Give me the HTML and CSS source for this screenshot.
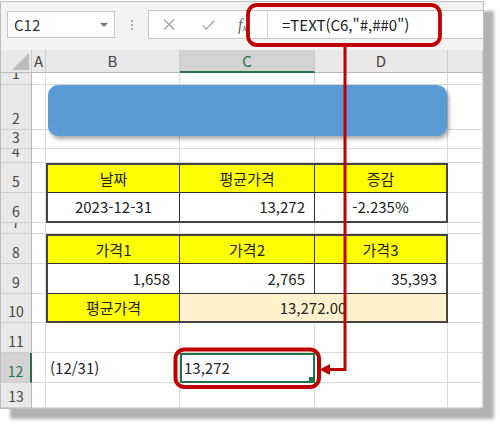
FILE: index.html
```html
<!DOCTYPE html>
<html lang="ko">
<head>
<meta charset="utf-8">
<title>TEXT 함수</title>
<link rel="stylesheet" href="styles.css">
</head>
<body>
<div class="stage">
  <div class="window">
    <div class="fbar">
      <div class="namebox"><span class="nb-text">C12</span><span class="nb-arrow"></span></div>
      <div class="grip"><i></i><i></i><i></i></div>
      <div class="formula">
        <div class="fbtns">
          <span class="fbtn"><svg width="12" height="11" viewBox="0 0 12 11"><path d="M1 0.5 L11 10.5 M11 0.5 L1 10.5" stroke="#a3a3a3" stroke-width="1.3" fill="none"/></svg></span>
          <span class="fbtn"><svg width="13" height="10" viewBox="0 0 13 10"><path d="M0.8 5.6 L4.4 9 L12.2 0.8" stroke="#a8a8a8" stroke-width="1.4" fill="none"/></svg></span>
          <span class="fbtn fx"><i>f</i><span class="fxx">x</span></span>
        </div>
        <div class="ftext">=TEXT(C6,"#,##0")</div>
      </div>
    </div>
    <div class="sheet">
      <div class="ch corner"><span class="tri"></span></div>
      <div class="ch">A</div>
      <div class="ch">B</div>
      <div class="ch sel">C</div>
      <div class="ch">D</div>
      <div class="ch"></div>

      <div class="rh">1</div><div></div><div></div><div></div><div></div><div></div>
      <div class="rh">2</div><div></div><div></div><div></div><div></div><div></div>
      <div class="rh">3</div><div></div><div></div><div></div><div></div><div></div>
      <div class="rh">4</div><div></div><div></div><div></div><div></div><div></div>

      <div class="rh">5</div><div></div>
      <div class="t tt tl y ctr">날짜</div>
      <div class="t tt y ctr">평균가격</div>
      <div class="t tt tr y ctr">증감</div>
      <div></div>

      <div class="rh">6</div><div></div>
      <div class="t tl tbm ctr">2023-12-31</div>
      <div class="t tbm rt">13,272</div>
      <div class="t tbm tr ctr">-2.235%</div>
      <div></div>

      <div class="rh">7</div><div></div><div></div><div></div><div></div><div></div>

      <div class="rh">8</div><div></div>
      <div class="t tt tl y ctr">가격1</div>
      <div class="t tt y ctr">가격2</div>
      <div class="t tt tr y ctr">가격3</div>
      <div></div>

      <div class="rh">9</div><div></div>
      <div class="t tl rt">1,658</div>
      <div class="t rt">2,765</div>
      <div class="t tr rt">35,393</div>
      <div></div>

      <div class="rh">10</div><div></div>
      <div class="t tl tbm y ctr">평균가격</div>
      <div class="t tbm tr o ctr span2">13,272.00</div>
      <div></div>

      <div class="rh">11</div><div></div><div></div><div></div><div></div><div></div>

      <div class="rh sel">12</div><div></div>
      <div class="lt">(12/31)</div>
      <div class="lt cur">13,272</div>
      <div></div><div></div>

      <div class="rh">13</div><div></div><div></div><div></div><div></div><div></div>
    </div>
    <div class="shape"></div>
  </div>
  <svg class="overlay" width="500" height="425" viewBox="0 0 500 425">
    <rect x="248" y="5" width="192" height="40" rx="9" ry="9" fill="none" stroke="#c00000" stroke-width="3.8"/>
    <polyline points="345,46 345,369.5 329,369.5" fill="none" stroke="#c00000" stroke-width="3"/>
    <polygon points="319.5,369.5 330,364 330,375" fill="#c00000"/>
    <rect x="175.5" y="349.5" width="143.5" height="37.5" rx="9" ry="9" fill="none" stroke="#c00000" stroke-width="4"/>
  </svg>
</div>
</body>
</html>
```

FILE: styles.css
```css
* { box-sizing: border-box; }

body {
  margin: 0;
  background: #ffffff;
  font-family: "Noto Sans CJK KR", "Noto Sans", sans-serif;
  color: #262626;
}

.stage {
  position: relative;
  width: 500px;
  height: 425px;
  overflow: hidden;
}

.window {
  position: relative;
  margin-top: 1px;
  width: 484px;
  border: 1px solid #bdbdbd;
  background: #ffffff;
  box-shadow: 10px 10px 3px rgba(0, 0, 0, 0.3);
}

/* formula bar */
.fbar {
  height: 48px;
  background: #f3f3f3;
  display: flex;
  align-items: flex-start;
  padding: 9px 0 0 6px;
}

.namebox {
  width: 108px;
  height: 27px;
  border: 1px solid #c6c6c6;
  background: #ffffff;
  display: flex;
  align-items: center;
  padding-left: 6px;
  font-size: 15px;
  color: #333;
}

.nb-arrow {
  margin-left: auto;
  margin-right: 6px;
  width: 0;
  height: 0;
  border-left: 4px solid transparent;
  border-right: 4px solid transparent;
  border-top: 4px solid #7a7a7a;
}

.grip {
  width: 33px;
  height: 27px;
  display: flex;
  flex-direction: column;
  align-items: center;
  justify-content: center;
  gap: 2px;
}

.grip i {
  display: block;
  width: 2px;
  height: 2px;
  background: #a9a9a9;
}

.formula {
  flex: 1;
  height: 29px;
  margin-top: -1px;
  border: 1px solid #c6c6c6;
  border-right: none;
  background: #ffffff;
  display: flex;
}

.fbtns {
  display: flex;
  width: 118px;
}

.fbtn {
  width: 39px;
  display: flex;
  align-items: center;
  justify-content: center;
}

.fbtn + .fbtn { width: 40px; }
.fbtn.fx {
  width: 39px;
  justify-content: flex-start;
  padding-left: 10px;
  color: #666;
  font-family: "Liberation Serif", serif;
  font-size: 16px;
}
.fxx { font-size: 11px; font-style: italic; margin-top: 5px; }

.ftext {
  flex: 1;
  border-left: 1px solid #d6d6d6;
  padding-left: 14px;
  font-size: 15px;
  line-height: 27px;
  color: #222;
  white-space: nowrap;
}

/* sheet grid */
.sheet {
  display: grid;
  grid-template-columns: 31px 14px 134px 135px 133px 35px;
  grid-template-rows: 23px 12px 45px 19px 14px 30px 30px 11px 30px 30px 29px 30px 30px 25px;
  font-size: 15px;
}

.sheet > div {
  border-right: 1px solid #dadada;
  border-bottom: 1px solid #dadada;
  display: flex;
  align-items: center;
  overflow: hidden;
  white-space: nowrap;
  line-height: 20px;
  color: #262626;
}

.sheet > .ch {
  background: #e9e9e9;
  border-right-color: #cbcbcb;
  border-bottom-color: #b9b9b9;
  justify-content: center;
  color: #444;
}

.sheet > .ch.sel {
  background: #d3d3d3;
  border-bottom: 2px solid #217346;
  color: #217346;
}

.sheet > .corner {
  position: relative;
}

.tri {
  position: absolute;
  right: 2px;
  bottom: 2px;
  width: 17px;
  height: 17px;
  background: #bcbcbc;
  clip-path: polygon(100% 0, 100% 100%, 0 100%);
}

.sheet > .rh {
  background: #e9e9e9;
  border-right-color: #b9b9b9;
  border-bottom-color: #cfcfcf;
  justify-content: center;
  align-items: flex-end;
  padding-bottom: 1px;
  font-size: 14px;
  color: #444;
}

.sheet > .rh.sel {
  background: #d3d3d3;
  border-right: 2px solid #217346;
  color: #217346;
}

/* table cells */
.sheet > .t {
  border-right: 1px solid #333;
  border-bottom: 1px solid #333;
  color: #222;
}
.sheet > .tt { border-top: 2px solid #444; }
.sheet > .tl { border-left: 2px solid #444; }
.sheet > .tr { border-right: 2px solid #444; }
.sheet > .tbm { border-bottom: 2px solid #444; }

.sheet > .y { background: #ffff00; }
.sheet > .o { background: #fff2cc; }
.sheet > .span2 { grid-column: span 2; }

.sheet > .ctr { justify-content: center; }
.sheet > .rt { justify-content: flex-end; padding-right: 9px; }
.sheet > .lt { justify-content: flex-start; padding-left: 4px; }

.sheet > .cur {
  position: relative;
  outline: 2px solid #217346;
  outline-offset: -2px;
}

.sheet > .cur::after {
  content: "";
  position: absolute;
  right: 0;
  bottom: 0;
  width: 5px;
  height: 5px;
  background: #217346;
}

/* overlays */
.shape {
  position: absolute;
  left: 47px;
  top: 83px;
  width: 399px;
  height: 51px;
  border-radius: 10px;
  background: #5b9bd5;
  box-shadow: 2px 3px 4px rgba(0, 0, 0, 0.35);
}

.overlay {
  position: absolute;
  left: 0;
  top: 0;
  pointer-events: none;
}
```
